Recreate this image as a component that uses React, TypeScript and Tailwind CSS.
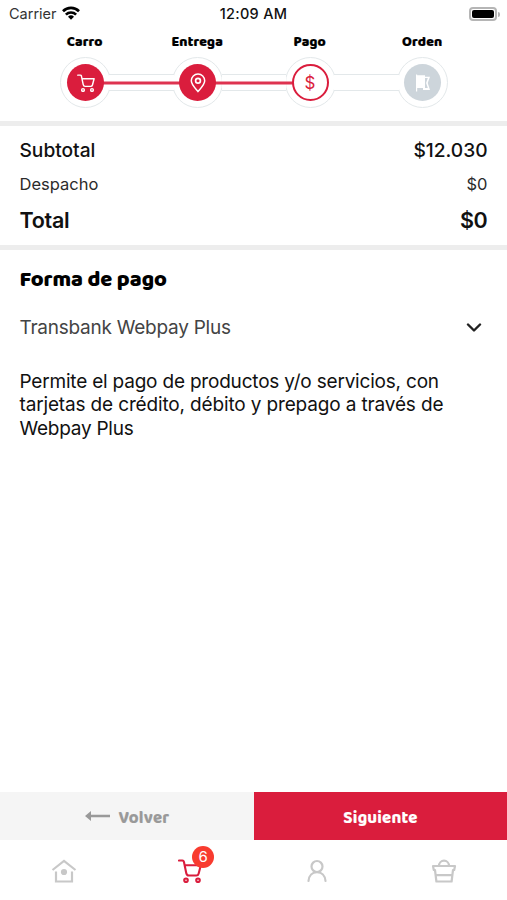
import React from "react";

const heading = "font-['Baloo_2','Baloo',Lato,sans-serif]";

function CartGlyph({ className, stroke }: { className: string; stroke: number }) {
  return (
    <svg className={className} viewBox="0 0 24 24" fill="none" stroke="currentColor" strokeWidth={stroke} strokeLinecap="round" strokeLinejoin="round">
      <path d="M1 1.500h3.400q1.200 0 1.500 1.200L8.300 14.200q.5 2.300 2.400 2.300h7.600q1.800 0 2.300-1.800L22.800 6.300H6.800" />
      <circle cx="8" cy="21.300" r="1.800" />
      <circle cx="20" cy="21.300" r="1.800" />
    </svg>
  );
}

function PinGlyph() {
  return (
    <svg className="h-5 w-4" viewBox="0 0 16 20" fill="none" stroke="currentColor" strokeWidth="1.500">
      <path d="M8 18.600C5 15 1.300 11.500 1.300 7.800a6.700 6.700 0 0 1 13.400 0C14.700 11.500 11 15 8 18.600Z" strokeLinejoin="round" />
      <circle cx="8" cy="7.800" r="2.400" strokeWidth="1.700" />
    </svg>
  );
}

function FlagGlyph() {
  return (
    <svg className="h-[18px] w-[14px]" viewBox="0 0 14 18" fill="currentColor">
      <path d="M0 .5h1.200v.8h7.800v12.700H1.200V17.500H0Z" />
      <path d="M8.500 2.800h5.500l-2.300 6.200 2.300 7H7v-2h4.800l-1.700-5 1.700-5H8.500Z" />
    </svg>
  );
}

function Lane({ active }: { active: boolean }) {
  return (
    <div className="relative z-10 -mx-[1.500px] flex h-[17px] w-[64.500px] items-center justify-center border-y border-[#e3e8ea] bg-white">
      {active && <div className="-mx-[8px] h-[3px] w-[79px] shrink-0 translate-y-[0.500px] bg-[#da1d3d]/90" />}
    </div>
  );
}

function Step({ tone, children }: { tone: string; children: React.ReactNode }) {
  return (
    <div className="flex size-[51px] shrink-0 items-center justify-center rounded-full border border-[#e3e8ea] bg-white">
      <div className={`relative z-20 flex size-[37px] items-center justify-center rounded-full ${tone}`}>{children}</div>
    </div>
  );
}

function Row({ label, value, className }: { label: string; value: string; className: string }) {
  return (
    <div className={`flex items-center justify-between ${className}`}>
      <span>{label}</span>
      <span>{value}</span>
    </div>
  );
}

export default function App() {
  return (
    <div className="flex h-[900px] w-[507px] flex-col overflow-hidden bg-white font-[Inter,sans-serif] text-[#111]">
      <header className="h-[121px] shrink-0">
        <div className="grid h-7 grid-cols-3 items-center pr-[7px] pl-[9px] text-[14.500px]">
          <div className="flex items-center gap-[5px] text-[#333]">
            <span>Carrier</span>
            <svg className="h-[14px] w-[18px] -translate-y-px text-black" viewBox="0 0 18 14" fill="none" stroke="currentColor" strokeWidth="2.700">
              <path d="M1 5.200a11.500 11.500 0 0 1 16 0" />
              <path d="M3.900 8.600a7.300 7.300 0 0 1 10.200 0" />
              <path d="M9 13.800 6 10.800a4.300 4.300 0 0 1 6 0Z" fill="currentColor" stroke="none" />
            </svg>
          </div>
          <div className="-ml-[2px] text-center font-medium tracking-[0.300px] whitespace-nowrap">12:09 AM</div>
          <div className="flex items-center justify-end gap-px">
            <div className="h-[14px] w-[28px] rounded-[4px] border-2 border-[#b5b5b5] p-px">
              <div className="h-full rounded-[2px] bg-black" />
            </div>
            <div className="h-[5px] w-[2px] rounded-r-full bg-[#b5b5b5]" />
          </div>
        </div>
        <div className={`ml-[28.500px] grid h-[26px] w-[450px] grid-cols-4 items-center pt-[2px] text-center text-[14px] font-extrabold tracking-[0.200px] text-black [-webkit-text-stroke:0.200px_currentColor] ${heading}`}>
          <span>Carro</span>
          <span>Entrega</span>
          <span>Pago</span>
          <span>Orden</span>
        </div>
        <div className="flex items-center pt-[3px] pl-[59.500px]">
          <Step tone="bg-[#da1d3d] text-white">
            <CartGlyph className="ml-[2px] size-[18px]" stroke={1.9} />
          </Step>
          <Lane active />
          <Step tone="bg-[#da1d3d] text-white">
            <PinGlyph />
          </Step>
          <Lane active />
          <Step tone="border-2 border-[#da1d3d] bg-white text-[#da1d3d]">
            <span className="pt-px text-[17px] leading-none font-normal">$</span>
          </Step>
          <Lane active={false} />
          <Step tone="bg-[#cdd5db] text-white">
            <FlagGlyph />
          </Step>
        </div>
      </header>

      <section className="h-[129px] shrink-0 border-y-[5px] border-[#ededed] px-[19.500px] pt-[6px]">
        <Row label="Subtotal" value="$12.030" className="h-9 pt-px text-[19.200px] font-medium tracking-[-0.030px]" />
        <Row label="Despacho" value="$0" className="h-8 text-[16.500px] text-[#2b2b2b]" />
        <Row label="Total" value="$0" className="h-10 text-[21.500px] font-semibold tracking-[-0.300px]" />
      </section>

      <main className="flex-1 px-[19.500px] pt-[12px]">
        <h2 className={`h-[34px] text-[22px] leading-[37px] font-extrabold text-black ${heading}`}>Forma de pago</h2>
        <div className="mt-[12px] flex h-10 items-center justify-between pr-[6px] text-[19px] tracking-[-0.250px] text-[#444]">
          <span>Transbank Webpay Plus</span>
          <svg className="h-[10px] w-4 text-[#222]" viewBox="0 0 16 10" fill="none" stroke="currentColor" strokeWidth="2.400" strokeLinecap="round" strokeLinejoin="round">
            <path d="m2 1.500 6 6 6-6" />
          </svg>
        </div>
        <p className="mt-[22px] text-[19px] leading-[23.400px] tracking-[-0.150px] whitespace-nowrap">
          <span className="tracking-[-0.200px]">Permite el pago de productos y/o servicios, con</span>
          <br />
          tarjetas de crédito, débito y prepago a través de
          <br />
          <span className="tracking-[-0.250px]">Webpay Plus</span>
        </p>
      </main>

      <div className={`flex h-[48px] shrink-0 text-[17px] font-bold tracking-[0.200px] [-webkit-text-stroke:0.200px_currentColor] ${heading}`}>
        <button className="flex w-[254px] items-center justify-center gap-[9px] bg-[#f5f5f5] text-[#999]">
          <svg className="h-[10px] w-[25px]" viewBox="0 0 25 10" fill="currentColor">
            <path d="M0 5 6 0v3.800h19v2.400H6V10Z" />
          </svg>
          <span className="pt-[5px]">Volver</span>
        </button>
        <button className="flex flex-1 items-center justify-center bg-[#da1d3d] pt-[5px] text-white">Siguiente</button>
      </div>

      <nav className="grid h-[60px] shrink-0 grid-cols-4 items-center justify-items-center pt-[2px] text-[#c8c8c8]">
        <svg className="ml-[2px] h-6 w-[26px]" viewBox="0 0 26 24" fill="none" stroke="currentColor" strokeWidth="2.200">
          <path d="M1.500 11 13 1.800 24.500 11" />
          <path d="M5 12.500v10h16v-10" />
          <circle cx="13" cy="13" r="3.100" fill="currentColor" stroke="none" />
        </svg>
        <div className="relative text-[#da1d3d]">
          <CartGlyph className="size-[24px]" stroke={2.1} />
          <span className="absolute -top-[13px] left-[14px] flex size-[22px] items-center justify-center rounded-full bg-[#f83b2f] text-[15px] text-white">6</span>
        </div>
        <svg className="h-6 w-[22px]" viewBox="0 0 22 24" fill="none" stroke="currentColor" strokeWidth="2.200" strokeLinecap="round">
          <circle cx="11" cy="7.500" r="5.500" />
          <path d="M2.500 22c.4-5.500 4-8.800 8.500-8.800s8.100 3.300 8.500 8.800" />
        </svg>
        <svg className="h-6 w-[26px]" viewBox="0 0 26 24" fill="none" stroke="currentColor" strokeWidth="2.200" strokeLinejoin="round">
          <path d="M8 7a5 5.300 0 0 1 10 0M2 7h22l-.8 4H22l-1.400 11.500H5.400L4 11H2.800ZM5 16.200h16" />
        </svg>
      </nav>
    </div>
  );
}
